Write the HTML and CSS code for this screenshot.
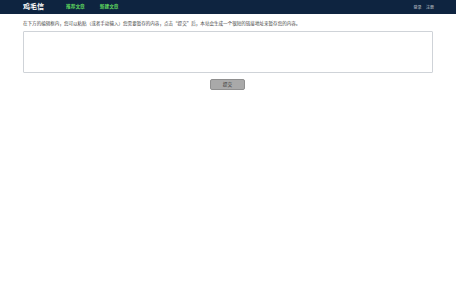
FILE: index.html
```html
<!DOCTYPE html>
<html lang="zh">
<head>
<meta charset="utf-8">
<title>鸡毛信</title>
<link rel="stylesheet" href="styles.css">
</head>
<body>
<header class="topbar">
  <div class="container bar-inner">
    <div class="left">
      <a class="logo" href="#">鸡毛信</a>
      <a class="nav-link" href="#">推荐文章</a>
      <a class="nav-link" href="#">新建文章</a>
    </div>
    <div class="right">
      <a class="user-link" href="#">登录</a>
      <a class="user-link" href="#">注册</a>
    </div>
  </div>
</header>
<main class="container main">
  <p class="hint">在下方的编辑框内，您可以粘贴（或者手动输入）您需要暂存的内容，点击“提交”后，本站会生成一个很短的链接地址来暂存您的内容。</p>
  <textarea class="editor"></textarea>
  <div class="actions">
    <button class="submit" type="button">提交</button>
  </div>
</main>
</body>
</html>
```
FILE: styles.css
```css
* { box-sizing: border-box; }
html, body { margin: 0; padding: 0; background: #fff; }
body { font-family: "Noto Sans CJK SC", "Liberation Sans", sans-serif; color: #333; }
a { text-decoration: none; }
.container { width: 410px; margin: 0 auto; }
.topbar { background: #0e2440; height: 13.5px; }
.bar-inner { height: 100%; display: flex; align-items: center; justify-content: space-between; }
.left { display: flex; align-items: center; }
.logo { color: #fff; font-size: 7px; font-weight: bold; line-height: 1; margin-right: 22px; }
.nav-link { color: #5fd85f; font-size: 4.7px; font-weight: bold; margin-right: 15px; line-height: 1; }
.right { display: flex; align-items: center; gap: 4.5px; margin-right: -1px; }
.user-link { color: #c8ccd2; font-size: 4px; line-height: 1; }
.main { padding-top: 6px; }
.hint { margin: 0; font-size: 4.55px; line-height: 6px; color: #444; }
.editor { display: block; width: 410px; height: 42.5px; margin-top: 5px; border: 1px solid #cfd3d8; border-radius: 1px; resize: none; padding: 2px; }
.actions { display: flex; justify-content: center; padding-top: 6px; padding-right: 1px; }
.submit { width: 35.5px; height: 11px; padding: 0; background: #a9a9a9; border: 0.7px solid #8f8f8f; border-radius: 2px; font-family: inherit; font-size: 4.7px; color: #333; line-height: 1; }
```
